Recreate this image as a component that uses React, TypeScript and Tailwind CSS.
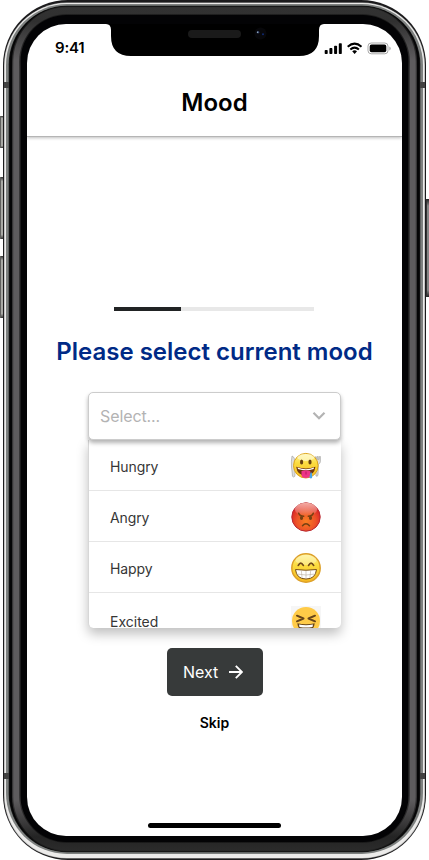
import React from 'react';

const ring = (inset: number, r: number) => ({
  x: 3 + inset,
  y: inset,
  width: 423 - inset * 2,
  height: 860 - inset * 2,
  rx: r,
});

function PhoneFrame() {
  return (
    <svg className="absolute inset-0" width="429" height="860" viewBox="0 0 429 860" aria-hidden="true">
      <defs>
        <linearGradient id="bezel" x1="0" y1="0" x2="0" y2="860" gradientUnits="userSpaceOnUse">
          <stop offset="0" stopColor="#333333" />
          <stop offset="0.025" stopColor="#303030" />
          <stop offset="0.07" stopColor="#5e5c5e" />
          <stop offset="0.93" stopColor="#5e5c5e" />
          <stop offset="0.973" stopColor="#242424" />
          <stop offset="1" stopColor="#303030" />
        </linearGradient>
        <linearGradient id="bezelEdge" x1="0" y1="0" x2="0" y2="860" gradientUnits="userSpaceOnUse">
          <stop offset="0" stopColor="#2b2b2b" />
          <stop offset="0.03" stopColor="#151515" />
          <stop offset="0.08" stopColor="#373637" />
          <stop offset="0.93" stopColor="#373637" />
          <stop offset="0.97" stopColor="#111111" />
          <stop offset="1" stopColor="#2b2b2b" />
        </linearGradient>
        <linearGradient id="key" x1="0" y1="0" x2="0" y2="1">
          <stop offset="0" stopColor="#333333" />
          <stop offset="0.07" stopColor="#a9a9a5" />
          <stop offset="0.93" stopColor="#a9a9a5" />
          <stop offset="1" stopColor="#333333" />
        </linearGradient>
        <linearGradient id="keyRight" x1="0" y1="0" x2="0" y2="1">
          <stop offset="0" stopColor="#222222" />
          <stop offset="0.07" stopColor="#858585" />
          <stop offset="0.93" stopColor="#858585" />
          <stop offset="1" stopColor="#222222" />
        </linearGradient>
      </defs>
      <rect x="0" y="116" width="4" height="32" fill="url(#key)" />
      <rect x="0" y="177" width="4" height="62" fill="url(#key)" />
      <rect x="0" y="256" width="4" height="62" fill="url(#key)" />
      <path d="M0.5 116v32M0.5 177v62M0.5 256v62" stroke="#60605e" />
      <rect x="425" y="199" width="4" height="98" fill="url(#keyRight)" />
      <path d="M426.5 199v98" stroke="#333333" />
      <rect {...ring(0, 65)} fill="#1c1b1d" />
      <rect x="4" y="2.6" width="421" height="856" rx="63" fill="#a9aaa9" />
      <rect x="4.6" y="3" width="419.8" height="855" rx="62.5" fill="#ecebea" />
      <rect x="6" y="4" width="417" height="850" rx="61" fill="#7d807f" />
      <rect x="8.7" y="5.8" width="411.6" height="846.500" rx="58.500" fill="#181818" />
      <rect x="9.5" y="6.2" width="410" height="845.500" rx="57.500" fill="#050506" />
      <rect x="12" y="6.5" width="405" height="845" rx="55" fill="url(#bezelEdge)" />
      <rect x="13.3" y="7.2" width="402.400" height="843.500" rx="54" fill="url(#bezel)" />
      <rect x="19" y="14" width="391" height="829" rx="48" fill="url(#bezelEdge)" />
      <rect x="20.5" y="15" width="388" height="827" rx="46" fill="#030305" />
      <rect x="4" y="82" width="5" height="6" fill="#424242" />
      <rect x="420" y="82" width="5" height="6" fill="#424242" />
      <rect x="4" y="773" width="5" height="6" fill="#424242" />
      <rect x="420" y="773" width="5" height="6" fill="#424242" />
    </svg>
  );
}

function Notch() {
  return (
    <svg className="absolute left-[79px] top-0" width="218" height="33" viewBox="106 24 218 33" aria-hidden="true">
      <path d="M106 24Q111 24 111 30V36Q111 56 131 56H299Q319 56 319 36V30Q319 24 324 24Z" fill="#000" />
      <rect x="188" y="30" width="53" height="8" rx="4" fill="#1a1a1a" />
      <circle cx="260.5" cy="33.5" r="6" fill="#07070a" />
      <circle cx="258" cy="32.3" r="1.3" fill="#28335f" />
      <circle cx="257.7" cy="32.3" r="0.7" fill="#a5c5c5" />
      <circle cx="263" cy="34.3" r="1" fill="#102a70" />
    </svg>
  );
}

function StatusIcons() {
  return (
    <svg width="67" height="13" viewBox="324 41.500 67 13" aria-hidden="true">
      <rect x="324.7" y="49.5" width="3" height="4" rx=".8" />
      <rect x="329.4" y="47.6" width="3" height="5.9" rx=".8" />
      <rect x="334.1" y="45.3" width="3" height="8.2" rx=".8" />
      <rect x="338.8" y="42.8" width="3" height="10.7" rx=".8" />
      <g fill="none" stroke="#000" strokeWidth="2">
        <path d="M347.7 46.3Q354.6 40 361.5 46.3" />
        <path d="M350.3 49Q354.6 45.2 358.9 49" />
      </g>
      <path d="M352.2 50.8Q354.6 48.9 357 50.8L354.6 53.4Z" />
      <rect x="368" y="42.5" width="20" height="10.8" rx="3.2" fill="none" stroke="#a7a7a7" />
      <rect x="369.7" y="44.1" width="16.6" height="7.6" rx="1.8" />
      <path d="M389.3 46v4q1.4-.6 1.4-2t-1.4-2" fill="#aaa" />
    </svg>
  );
}

function EmojiDefs() {
  return (
    <svg className="absolute h-0 w-0" aria-hidden="true">
      <defs>
        <linearGradient id="yellow" x1="0" y1="0" x2="0" y2="1">
          <stop offset="0" stopColor="#fff39a" />
          <stop offset="0.4" stopColor="#fbdc3f" />
          <stop offset="1" stopColor="#f5b820" />
        </linearGradient>
        <linearGradient id="shine" x1="0" y1="0" x2="0" y2="1">
          <stop offset="0" stopColor="#ffd0c0" stopOpacity=".8" />
          <stop offset="1" stopColor="#fff" stopOpacity="0" />
        </linearGradient>
        <radialGradient id="red" cx=".5" cy=".65" r=".6">
          <stop offset="0" stopColor="#f97f22" />
          <stop offset=".55" stopColor="#ed5428" />
          <stop offset="1" stopColor="#d72025" />
        </radialGradient>
      </defs>
    </svg>
  );
}

function Hungry() {
  return (
    <svg width="32" height="32" viewBox="0 0 32 32">
      <g stroke="#9b9b99" strokeWidth=".6" fill="#ddd">
        <path d="M2 6q3 1 3 7v12q0 2-1.500 2t-1.200-3L1.500 17Q1 11 2 6Z" />
        <path d="M25 7l1.200-.3.500 3 .7-.1-.3-3 1.200-.1v3l.8 0 .3-3h1v5q0 2-2 2.600L28 25q-.4 2-2 1Z" />
      </g>
      <circle cx="15.800" cy="15.700" r="12.300" fill="url(#yellow)" stroke="#dda51e" />
      <ellipse cx="15.800" cy="7.400" rx="8.500" ry="3.500" fill="#fffde0" opacity=".6" />
      <ellipse cx="11.600" cy="12" rx="1.600" ry="2.500" fill="#674111" />
      <ellipse cx="20" cy="12" rx="1.600" ry="2.500" fill="#674111" />
      <path d="M6.200 16.700Q16 20.300 25.400 16.700Q24.500 25.500 15.800 25.700Q7.200 25.500 6.200 16.700Z" fill="#6b3510" />
      <path d="M7.500 17.600Q16 20.700 24 17.600L23.700 19Q16 21.500 8 19Z" fill="#fff" />
      <path d="M11.500 21q4.500-1.600 8.800 0v4q0 3-4.400 3t-4.400-3Z" fill="#ed3487" />
      <path d="M16 21.500v3" stroke="#b91761" />
      <path d="M20.500 22.500h1.200l.5 3.500q.3 2.500-1.300 2.500t-1.300-2Z" fill="#48a5e8" />
    </svg>
  );
}

function Angry() {
  return (
    <svg width="32" height="32" viewBox="0 0 32 32">
      <circle cx="16" cy="16" r="14.200" fill="url(#red)" stroke="#b92831" />
      <ellipse cx="16" cy="8.300" rx="11.200" ry="6.500" fill="url(#shine)" />
      <g fill="none" stroke="#754012" strokeLinecap="round">
        <path d="M8.700 12.200q1 3 5 3M23.300 12.200q-1 3-5 3" strokeWidth="1.500" />
        <path d="M12.500 24.700q3.500-4 7 0" strokeWidth="1.500" />
      </g>
      <ellipse cx="11.500" cy="17" rx="1.600" ry="2" fill="#754012" />
      <ellipse cx="20.500" cy="17" rx="1.600" ry="2" fill="#754012" />
    </svg>
  );
}

function Happy() {
  return (
    <svg width="32" height="32" viewBox="0 0 32 32">
      <circle cx="16" cy="16" r="14.200" fill="url(#yellow)" stroke="#dda02a" strokeWidth="1.500" />
      <ellipse cx="16" cy="8" rx="10.500" ry="5" fill="#fffbd3" opacity=".4" />
      <path d="M8.300 13.400q2.400-4.500 5 0M18.600 13.400q2.500-4.500 5 0" fill="none" stroke="#73491b" strokeWidth="1.700" strokeLinecap="round" />
      <path d="M5.500 17.500Q16 19 26.500 17.500Q25.500 27 16 27T5.500 17.500Z" fill="#fff" stroke="#795017" />
      <path d="M6.700 22Q16 24 25.300 22M11.300 18.500l.8 7.500M16 18.700v8M20.700 18.500l-.8 7.500" fill="none" stroke="#b8ad9a" strokeWidth=".6" />
    </svg>
  );
}

function Excited() {
  return (
    <svg width="32" height="32" viewBox="0 0 32 32">
      <rect x="1" width="30" height="32" fill="#f6f6f6" />
      <circle cx="16" cy="15" r="14" fill="#ffcb48" />
      <g fill="none" stroke="#67451a" strokeWidth="2" strokeLinecap="round" strokeLinejoin="round">
        <path d="M7 9.700l6.500 2.800L7 15.300M25 9.700l-6.500 2.800 6.500 2.800" />
      </g>
      <path d="M7.300 17.200Q16 19.200 24.700 17.200Q24 25 16 25T7.300 17.200Z" fill="#67451a" />
      <path d="M9 18.500Q16 19.800 23 18.500L22.500 21Q16 22 9.500 21Z" fill="#fff" />
    </svg>
  );
}

const moods = [
  { name: 'Hungry', Icon: Hungry },
  { name: 'Angry', Icon: Angry },
  { name: 'Happy', Icon: Happy },
];

export default function App() {
  return (
    <div className="relative h-[860px] w-[429px] overflow-hidden bg-white pl-[27px] pt-6 font-['Inter',sans-serif] text-black">
      <PhoneFrame />
      <EmojiDefs />
      <div className="relative flex h-[812px] w-[375px] flex-col overflow-hidden rounded-[39px] bg-white">
        <Notch />
        <header className="h-[113px] shrink-0 border-b border-[#b5b5b5] shadow-[0_1px_3px_rgba(0,0,0,0.25)]">
          <div className="flex h-12 items-center justify-between pl-7 pr-[11px]">
            <span className="text-[15px] font-semibold leading-5 tracking-[-0.2px]">9:41</span>
            <StatusIcons />
          </div>
          <h1 className="mt-[15px] text-center text-2xl font-semibold leading-8">Mood</h1>
        </header>

        <main className="flex flex-col items-center">
          <div className="mr-px mt-[170px] h-1 w-[200px] bg-[#e8e8e8]">
            <div className="h-1 w-[67px] bg-[#212324]" />
          </div>
          <h2 className="mt-[25px] whitespace-nowrap text-2xl font-semibold leading-8 text-[#002a86]">Please select current mood</h2>

          <div className="mt-6 w-[253px]">
            <button className="relative z-10 flex h-12 w-full items-center justify-between rounded-[5px] border border-[#cccccc] bg-white pl-[11px] pr-[14px] text-base text-[#b3b3b3] shadow-[0_3px_4px_rgba(0,0,0,0.3)]">
              <span className="tracking-[-0.1px]">Select...</span>
              <svg width="14" height="10" viewBox="0 0 14 10" fill="none" stroke="#b3b3b3" strokeWidth="2.2">
                <path d="M1.500 1.800L7 7.300l5.500-5.500" />
              </svg>
            </button>
            <ul className="h-[188px] overflow-hidden rounded-b-[5px] border-l border-[#d7d7d7] bg-white text-sm text-[#363636] shadow-[0_6px_12px_rgba(0,0,0,0.25)]">
              {moods.map(({ name, Icon }) => (
                <li key={name} className="flex h-[51px] items-center justify-between border-b border-[#e6e6e6] pl-[21px] pr-[19px]">
                  <span className="pt-1 tracking-[-0.1px]">{name}</span>
                  <span className="pt-0.5">
                    <Icon />
                  </span>
                </li>
              ))}
              <li className="flex items-start justify-between pl-[21px] pr-[19px] pt-[13px]">
                <span className="mt-[6px]">Excited</span>
                <Excited />
              </li>
            </ul>
          </div>

          <button className="mt-5 flex h-12 w-24 items-center gap-[11px] rounded-[5px] bg-[#373a3a] pl-[16.5px] text-base text-white">
            <span>Next</span>
            <svg width="14" height="14" viewBox="0 0 14 14" fill="none" stroke="white" strokeWidth="1.900">
              <path d="M0 7h13M6.800.8L13 7l-6.200 6.200" />
            </svg>
          </button>
          <button className="mt-[17px] text-sm font-semibold leading-5">Skip</button>
          <div className="mt-[90px] h-[5px] w-[133px] rounded-full bg-black" />
        </main>
      </div>
    </div>
  );
}
